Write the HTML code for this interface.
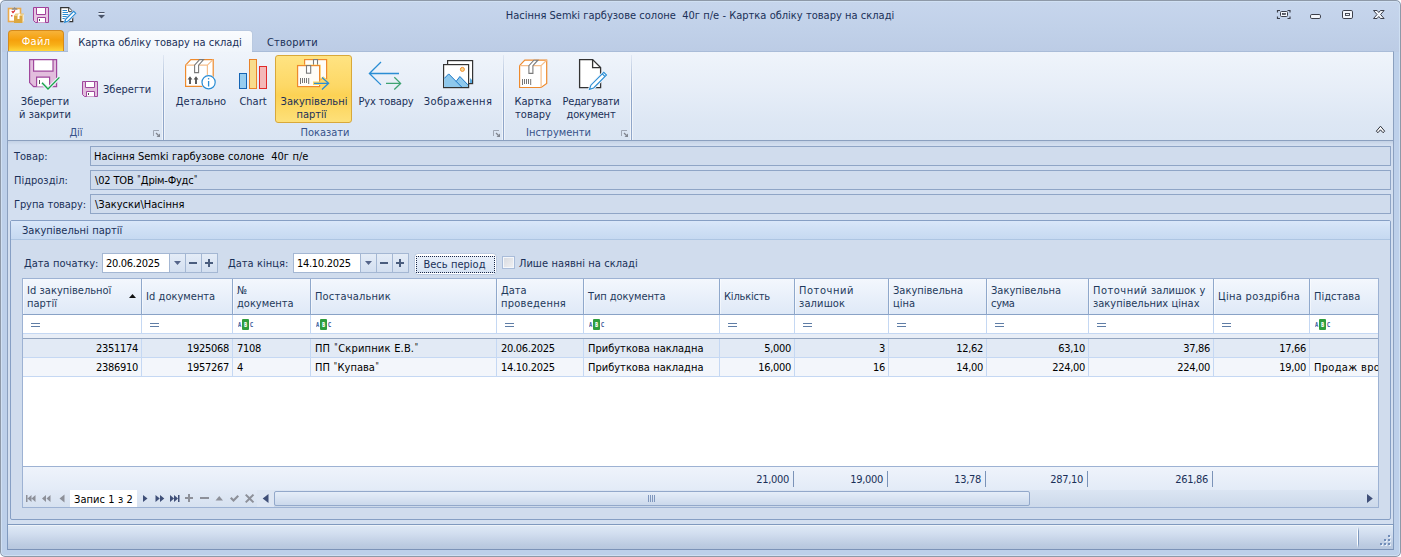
<!DOCTYPE html>
<html lang="uk">
<head>
<meta charset="utf-8">
<title>Картка обліку товару на складі</title>
<style>
*{box-sizing:border-box;margin:0;padding:0}
html,body{width:1401px;height:557px;overflow:hidden;background:#fff}
body{font-family:"DejaVu Sans Condensed","DejaVu Sans","Liberation Sans",sans-serif;font-size:11px;color:#1a3058;position:relative;line-height:13px;word-spacing:0.25px}
#win{position:absolute;left:0;top:0;width:1401px;height:557px;background:#bdd0ea;border-radius:5px;overflow:hidden}
#win div,#win span,#win svg{position:absolute}
.t{white-space:pre}
.d{letter-spacing:-.3px}
#win span.w{position:static;letter-spacing:.17px}
#win span.q{position:relative;font-size:8px;top:-2px;padding:0 .5px}
.c{text-align:center}
.r{text-align:right;letter-spacing:-.3px}
.k{color:#000}
.inp{border:1px solid #8fa5c6;background:#d0dced;height:20px;left:90px;width:1301px}
.inp>span{left:3px;top:3px;color:#000}
.hd{top:0;height:36px;border-bottom:1px solid #89a2c6;border-right:1px solid #8fa8cb;background:linear-gradient(#f3f7fd,#e9f0fa 50%,#dfe9f7);box-shadow:inset 1px 0 0 rgba(255,255,255,.5)}
.hd span{left:4px;white-space:pre;color:#1e395b}
.fc{top:36px;height:19px;background:#fff;border-right:1px solid #c5d8f3;border-bottom:1px solid #c5d8f3}
.cell{height:19px;border-right:1px solid #c5d8f3;border-bottom:1px solid #c5d8f3;color:#000;white-space:pre;padding:3px 3px 0 4px;overflow:hidden}
.r1 .cell{background:#e2eaf5}
.r2 .cell{background:#f3f6fb}
.eq{left:8px;top:8px;width:9px;height:4px;border-top:1px solid #5f7da6;border-bottom:1px solid #5f7da6}
.sbtn{width:16px;height:20px;border:1px solid #a4b7d3;border-left:none;background:linear-gradient(#e4ecf7,#d3dff0)}
</style>
</head>
<body>
<div id="win">

<div id="title" style="left:0;top:0;width:1401px;height:52px;background:linear-gradient(#c7d6ed,#c1d1e9 28px,#bccce5)"></div>
<div class="t c" style="left:400px;top:9px;width:600px;word-spacing:.1px">Насіння Semki гарбузове солоне  40г п/е - Картка обліку товару на складі</div>
<div id="file" style="left:8px;top:30px;width:56px;height:21px;border:1px solid #d48a1c;border-bottom:none;border-radius:4px 4px 0 0;background:linear-gradient(#f7b33a,#f5a00c 45%,#f8b018 70%,#ffd53a)"><span class="t c" style="left:0;top:4px;width:54px;color:#fff;letter-spacing:.3px">Файл</span></div>
<div id="tab1" style="left:67px;top:30px;width:186px;height:22px;border:1px solid #b9c9e0;border-bottom:none;border-radius:4px 4px 0 0;background:linear-gradient(#fafcfe,#f0f5fb)"><span class="t c" style="left:0;top:5px;width:184px;letter-spacing:-.07px">Картка обліку товару на складі</span></div>
<div class="t" style="left:267px;top:36px;letter-spacing:.19px">Створити</div>
<div id="ribbon" style="left:7px;top:51px;width:1387px;height:90px;border:1px solid #8ba0bf;border-top-color:#a9bcd8;background:linear-gradient(#eff4fb,#e7eef8 35px,#dde7f4 70px,#dae5f3)"></div>
<div style="left:68px;top:51px;width:184px;height:1px;background:#f0f5fb"></div>
<div style="left:162px;top:55px;width:3px;height:85px;background:linear-gradient(rgba(255,255,255,0),rgba(255,255,255,.55) 40%,rgba(255,255,255,.55))"></div>
<div style="left:163px;top:55px;width:1px;height:85px;background:linear-gradient(rgba(143,166,201,0.15),#8fa6c9 45%,#8fa6c9)"></div>
<div style="left:502px;top:55px;width:3px;height:85px;background:linear-gradient(rgba(255,255,255,0),rgba(255,255,255,.55) 40%,rgba(255,255,255,.55))"></div>
<div style="left:503px;top:55px;width:1px;height:85px;background:linear-gradient(rgba(143,166,201,0.15),#8fa6c9 45%,#8fa6c9)"></div>
<div style="left:630px;top:55px;width:3px;height:85px;background:linear-gradient(rgba(255,255,255,0),rgba(255,255,255,.55) 40%,rgba(255,255,255,.55))"></div>
<div style="left:631px;top:55px;width:1px;height:85px;background:linear-gradient(rgba(143,166,201,0.15),#8fa6c9 45%,#8fa6c9)"></div>
<div class="t c" style="left:8px;top:126px;width:136px;color:#36528a">Дії</div>
<div class="t c" style="left:165px;top:126px;width:320px;color:#36528a">Показати</div>
<div class="t c" style="left:505px;top:126px;width:107px;color:#36528a">Інструменти</div>
<div style="left:275px;top:55px;width:77px;height:68px;border:1px solid #d8a83a;border-radius:3px;background:linear-gradient(#ffe382,#fdd866 45%,#fcd254 60%,#fde07a)"></div>
<div class="t c" style="left:-5px;top:95px;width:100px">Зберегти</div>
<div class="t c" style="left:-5px;top:108px;width:100px">й закрити</div>
<div class="t" style="left:103px;top:83px">Зберегти</div>
<div class="t c" style="left:151px;top:95px;width:100px">Детально</div>
<div class="t c" style="left:203px;top:95px;width:100px">Chart</div>
<div class="t c" style="left:264px;top:95px;width:100px">Закупівельні</div>
<div class="t c" style="left:261.5px;top:108px;width:100px">партії</div>
<div class="t c" style="left:336px;top:95px;width:100px;letter-spacing:-0.2px">Рух товару</div>
<div class="t c" style="left:408px;top:95px;width:100px;letter-spacing:0.38px">Зображення</div>
<div class="t c" style="left:483px;top:95px;width:100px">Картка</div>
<div class="t c" style="left:483px;top:108px;width:100px">товару</div>
<div class="t c" style="left:541px;top:95px;width:100px;letter-spacing:-0.33px">Редагувати</div>
<div class="t c" style="left:541px;top:108px;width:100px;letter-spacing:-0.2px">документ</div>
<svg id="icons" style="left:0;top:0" width="1401" height="141" viewBox="0 0 1401 141" fill="none">
<!-- save and close (large) -->
<g stroke="#a0479d" stroke-width="1.2">
<path d="M29.6 59.6h27v27h-23l-4-4z" fill="#e2bedd"/>
<path d="M33.6 59.6h19.4v11.6h-19.4z" fill="#fff"/>
<path d="M36.6 86.6v-9.4h13v9.4" fill="#fff"/>
</g>
<path d="M39.5 80v4" stroke="#555" stroke-width="1"/>
<path d="M42 82.700l6 6.300 11.400-11.600" stroke="#eaf0f9" stroke-width="3.600"/>
<path d="M42 82.7l6 6.3 11.4-11.6" stroke="#1aa44a" stroke-width="1.3"/>
<!-- save small -->
<g stroke="#a0479d" stroke-width="1">
<path d="M82.5 81.5h15v15h-13l-2-2z" fill="#e2bedd"/>
<path d="M85.5 81.5h9v6h-9z" fill="#fff"/>
<path d="M86.5 96.5v-5h8v5" fill="#fff"/>
</g>
<path d="M88.5 93v2" stroke="#555" stroke-width="1"/>
<!-- detail box -->
<g stroke="#ee8a2d" stroke-width="1.2">
<path d="M185.6 65.2l5.2-5.6h22.4v20l-5.6 6.8h-22z" fill="#fff"/>
</g>
<path d="M185.6 65.2h21.8v21M207.4 65.2l5.6-5.6" stroke="#f6bf8c" stroke-width="1.2"/>
<path d="M199.6 59.6h4l-5 5.6v7.4h-4v-7.4z" fill="#fff" stroke="#7a7a7a" stroke-width="1.1"/>
<path d="M190 84v-6M196 84v-6" stroke="#555" stroke-width="1.900"/>
<path d="M187.600 79.400l2.400-3.200 2.400 3.200zM193.600 79.400l2.400-3.200 2.400 3.200z" fill="#555"/>
<circle cx="208.6" cy="82.3" r="7.6" fill="#eef3fa"/>
<circle cx="208.6" cy="82.3" r="6.6" fill="#fff" stroke="#2a8dd4" stroke-width="1.2"/>
<path d="M208.6 81v5.400" stroke="#2a8dd4" stroke-width="1.3"/>
<circle cx="208.6" cy="78.700" r="0.8" fill="#2a8dd4"/>
<!-- chart -->
<rect x="239.5" y="73.500" width="7" height="15" fill="#97cdf0" stroke="#1464b4"/>
<rect x="249.500" y="59.500" width="7" height="29" fill="#f8dc8c" stroke="#e8822a"/>
<rect x="259.500" y="66.500" width="7" height="22" fill="#f4b8b8" stroke="#e02a2a"/>
<!-- purchase batches -->
<rect x="304.600" y="59.600" width="22" height="19.500" fill="#fffdf8" stroke="#ee8a2d" stroke-width="1.2"/>
<rect x="313.500" y="59.600" width="4" height="6" fill="#fff" stroke="#7a7a7a" stroke-width="1.1"/>
<rect x="296.600" y="64.600" width="24" height="23" fill="#fdd866"/>
<rect x="297.600" y="65.600" width="22" height="21" fill="#fffdf8" stroke="#ee8a2d" stroke-width="1.200"/>
<rect x="306.500" y="65.600" width="4.200" height="7.600" fill="#fff" stroke="#7a7a7a" stroke-width="1.100"/>
<path d="M300.500 78v6M302.500 78v5M304.500 78v5M306.500 78v5M308.700 78v6" stroke="#666" stroke-width="0.9"/>
<path d="M313 83.300h15M322 77.500l6.600 5.800-6.600 6.200" stroke="#fdd866" stroke-width="3.600"/>
<path d="M314 83.300h14.400M322 77.500l6.600 5.800-6.600 6.200" stroke="#2a8dd4" stroke-width="1.300"/>
<!-- movement -->
<path d="M399 73.500h-29.500M381 62l-11.600 11.500 11.600 11.400" stroke="#2a8dd4" stroke-width="1.300"/>
<path d="M386 83.400h14.500M394.300 77.300l6.300 6.100-6.300 6.100" stroke="#3fa372" stroke-width="1.300"/>
<!-- images -->
<rect x="447.600" y="60.600" width="25" height="23" fill="#fff" stroke="#333" stroke-width="1.200"/>
<path d="M470 78l2 2v3h-2z" fill="#5aaae0"/>
<rect x="443.600" y="64.600" width="25" height="23" fill="#fff" stroke="#333" stroke-width="1.200"/>
<path d="M444.200 78.500l4.500-4.600 7.500 7.500 3.700-4.900 8.100 8.400v2.100h-23.800z" fill="#8ec8ec"/>
<path d="M444.200 78.500l4.500-4.600 13 13.100M456.200 81.400l3.700-4.900 8.100 8.400" stroke="#1a78c8" stroke-width="1"/>
<circle cx="462.400" cy="69.400" r="2" fill="#f8d890" stroke="#f08a28" stroke-width="1"/>
<!-- product card box -->
<path d="M519.600 65.600l5.200-5.400h21.900v23.300l-5.600 4h-21.500z" fill="#fff" stroke="#ee8a2d" stroke-width="1.200"/>
<path d="M519.600 65.600h21.500v21.800M541.100 65.600l5.600-5.400" stroke="#f6bf8c" stroke-width="1.200"/>
<path d="M533.900 60.200h4l-5 5.400v7.800h-4v-7.800z" fill="#fff" stroke="#7a7a7a" stroke-width="1.100"/>
<path d="M522.500 79v6M524.500 79v5M526.500 79v5M528.500 79v5M530.700 79v6" stroke="#666" stroke-width="0.900"/>
<!-- edit document -->
<path d="M579.600 59.600h13l8 8v20h-21z" fill="#fff" stroke="#333" stroke-width="1.300"/>
<path d="M592.600 59.600v8h8" stroke="#333" stroke-width="1.300"/>
<path d="M589.500 89.300l1.400-4.100 12.900-12.900 2.700 2.700-12.900 12.900z" fill="#fff" stroke="#eef3fa" stroke-width="3"/>
<path d="M589.500 89.300l1.400-4.100 12.900-12.900 2.700 2.700-12.900 12.900zM602.300 73.800l2.700 2.700" fill="#fff" stroke="#2a8dd4" stroke-width="1.100"/>
<!-- QAT 1: clipboard + box -->
<rect x="8.500" y="8.500" width="12" height="13" fill="#fff" stroke="#eaaa4e" stroke-width="1.600"/>
<path d="M11.500 9.700h6.200l-1-1.500h-1.200l-.9-1.200-.9 1.200h-1.200z" fill="#8a8a8a"/>
<path d="M11.800 11.200l1.200 1.300 2-2.200M11.800 15v1.600" stroke="#d62a2a" stroke-width="1.200"/>
<path d="M14 16l1.500-2.300h8.500v7.300l-1.500 2h-8.500z" fill="#dba73f"/>
<path d="M14 16h8.500l1.500-2.300h-8.500z" fill="#efd089"/>
<path d="M22.500 16v7l1.500-2v-7.300z" fill="#fff" opacity=".75"/>
<path d="M17.500 16l1.300-2.300h1.800l-1.100 2.300v3h-2z" fill="#fff"/>
<!-- QAT 2: save -->
<g stroke="#a0409a" stroke-width="1">
<path d="M33.500 7.500h15v15h-13l-2-2z" fill="#e6c6e2"/>
<path d="M36.500 7.500h9v7h-9z" fill="#fff"/>
<path d="M37.500 22.500v-5h8v5" fill="#fff"/>
</g>
<path d="M39.500 19v2" stroke="#555" stroke-width="1"/>
<!-- QAT 3: doc edit -->
<path d="M60.700 7.700h8l4 4v10h-12z" fill="#fff" stroke="#333" stroke-width="1.200"/>
<path d="M68.700 7.700v4h4" fill="#fff" stroke="#333" stroke-width="1"/>
<path d="M62.500 10.500h4.500M62.500 12.500h5.500M62.500 14.500h6M62.500 16.500h5M62.500 18.500h3" stroke="#2a8dd4" stroke-width="1"/>
<path d="M64.700 22.300l1-3 8-8 2 2-8 8z" fill="#fff" stroke="#c1d1e9" stroke-width="2.600"/>
<path d="M64.700 22.300l1-3 8-8 2 2-8 8z" fill="#fff" stroke="#2a8dd4" stroke-width="1.100"/>
<path d="M64.700 22.300l.6-1.800 1.200 1.200z" fill="#2a8dd4"/>
<!-- QAT dropdown -->
<path d="M98.500 12.500h6" stroke="#4a5468" stroke-width="1"/>
<path d="M98.500 13.500h6" stroke="#e8eef7" stroke-width="1"/>
<path d="M98 15h7l-3.500 3.500z" fill="#4a5468"/>
<!-- window buttons -->
<g stroke="#3c3f4a" fill="#f4f7fc">
<path d="M1277.500 12.500v-2h2.500M1287.500 10.500h2.500v2M1290 16.500v2h-2.500M1280 18.500h-2.500v-2" fill="none" stroke-width="1.200"/>
<rect x="1280.500" y="11.500" width="7" height="5" rx="1" stroke-width="1"/>
<rect x="1282.500" y="13.500" width="3" height="1" stroke-width=".800" fill="#fff"/>
<rect x="1310.500" y="14.500" width="10" height="4" rx="1.300"/>
<rect x="1342.500" y="10.500" width="10" height="8" rx="1.300"/>
<rect x="1345.500" y="13.500" width="4" height="2" stroke-width=".900"/>
<path d="M1373.500 10.500h3.600l1.700 2 1.700-2h3.600l-3.500 4 3.500 4h-3.600l-1.700-2-1.700 2h-3.600l3.500-4z" stroke-linejoin="round"/>
</g>
<!-- collapse chevron -->
<path d="M1376.300 131.200l4.200-5 4.200 5-1.700 1.500-2.500-2.900-2.500 2.900z" fill="#fff" stroke="#2b2f3a" stroke-width="1" stroke-linejoin="round"/>
<!-- dialog launchers -->
<g>
<path d="M153.500 136v-5.500h5.500" stroke="#9fa6b3" stroke-width="1"/>
<path d="M156.500 137h3.500v-3.500z" fill="#80858f"/><path d="M156 133l2.500 2.500" stroke="#80858f" stroke-width="1.200"/>
</g>
<g transform="translate(340 0)">
<path d="M153.500 136v-5.500h5.500" stroke="#9fa6b3" stroke-width="1"/>
<path d="M156.500 137h3.500v-3.500z" fill="#80858f"/><path d="M156 133l2.500 2.500" stroke="#80858f" stroke-width="1.200"/>
</g>
<g transform="translate(468 0)">
<path d="M153.500 136v-5.500h5.500" stroke="#9fa6b3" stroke-width="1"/>
<path d="M156.500 137h3.500v-3.500z" fill="#80858f"/><path d="M156 133l2.500 2.500" stroke="#80858f" stroke-width="1.200"/>
</g>

</svg>
<div id="content" style="left:7px;top:141px;width:1387px;height:384px;border-left:1px solid #8ba0bf;border-right:1px solid #8ba0bf;background:linear-gradient(#c3d1e5,#d3dff0 4px,#d3dff0)"></div>
<div class="t" style="left:14px;top:150px">Товар:</div>
<div class="inp" style="top:146px"><span class="t" style="left:3px">Насіння Semki гарбузове солоне  40г п/е</span></div>
<div class="t" style="left:14px;top:174px">Підрозділ:</div>
<div class="inp" style="top:170px"><span class="t" style="left:4px;letter-spacing:-.2px">\02 ТОВ <span class=q>"</span>Дрім-Фудс<span class=q>"</span></span></div>
<div class="t" style="left:14px;top:198px;letter-spacing:-.1px">Група товару:</div>
<div class="inp" style="top:194px"><span class="t" style="left:4px">\Закуски\Насіння</span></div>
<div id="gb" style="left:10px;top:220px;width:1381px;height:300px;border:1px solid #869fc4;border-radius:2px;background:#d0dced"></div>
<div style="left:11px;top:221px;width:1379px;height:19px;background:linear-gradient(#dae7f9,#d2e2f6 30%,#c6d9f1);border-bottom:1px solid #adc5e2"></div>
<div class="t" style="left:22px;top:224px">Закупівельні партії</div>
<div class="t" style="left:24px;top:257px">Дата початку:</div>
<div style="left:102px;top:253px;width:68px;height:20px;border:1px solid #a4b7d3;background:#fff"><span class="t k d" style="left:3px;top:3px">20.06.2025</span></div>
<div class="sbtn" style="left:170px;top:253px"><svg style="left:4px;top:7px" width="7" height="4"><path d="M0 0h7L3.5 4z" fill="#55658a"/></svg></div>
<div class="sbtn" style="left:186px;top:253px"><span style="left:3px;top:8px;width:8px;height:2px;background:#4a5d7e"></span></div>
<div class="sbtn" style="left:202px;top:253px"><span style="left:3px;top:8px;width:8px;height:2px;background:#4a5d7e"></span><span style="left:6px;top:5px;width:2px;height:8px;background:#4a5d7e"></span></div>
<div class="t" style="left:228px;top:257px">Дата кінця:</div>
<div style="left:293px;top:253px;width:68px;height:20px;border:1px solid #a4b7d3;background:#fff"><span class="t k d" style="left:3px;top:3px">14.10.2025</span></div>
<div class="sbtn" style="left:361px;top:253px"><svg style="left:4px;top:7px" width="7" height="4"><path d="M0 0h7L3.5 4z" fill="#55658a"/></svg></div>
<div class="sbtn" style="left:377px;top:253px"><span style="left:3px;top:8px;width:8px;height:2px;background:#4a5d7e"></span></div>
<div class="sbtn" style="left:393px;top:253px"><span style="left:3px;top:8px;width:8px;height:2px;background:#4a5d7e"></span><span style="left:6px;top:5px;width:2px;height:8px;background:#4a5d7e"></span></div>
<div style="left:414px;top:253px;width:83px;height:22px;border:1px solid #bccbe2;border-radius:4px;background:#fff"><span style="left:1px;top:2px;width:79px;height:17px;background:linear-gradient(#e9f0fa,#d7e3f3)"></span><span style="left:1px;top:2px;width:79px;height:17px;border:1px dotted #1c2a4a"></span><span class="t c" style="left:-1px;top:4px;width:81px">Весь період</span></div>
<div style="left:502px;top:256px;width:13px;height:13px;border:1px solid #a9bcd9;background:#f4f7fb"><span style="left:1px;top:1px;width:9px;height:9px;background:linear-gradient(135deg,#d9dce2,#efeff1)"></span></div>
<div class="t" style="left:519px;top:257px">Лише наявні на складі</div>
<div id="grid" style="left:22px;top:278px;width:1357px;height:230px;border:1px solid #9db2d3;background:#fff;overflow:hidden">
<div class="hd" style="left:0px;width:119px"><span style="top:5px">Id закупівельної</span><span style="top:18px">партії</span><svg style="left:106px;top:15px" width="7" height="4"><path d="M0 4h7L3.5 0z" fill="#111"/></svg></div>
<div class="fc" style="left:0px;width:119px"><span class=eq></span></div>
<div class="hd" style="left:119px;width:91px"><span style="top:11px">Id документа</span></div>
<div class="fc" style="left:119px;width:91px"><span class=eq></span></div>
<div class="hd" style="left:210px;width:78px"><span style="top:5px">№</span><span style="top:18px">документа</span></div>
<div class="fc" style="left:210px;width:78px"><svg style="left:5px;top:4px" width="16" height="11"><rect x="4" y="0" width="7" height="11" rx="1" fill="#2f9e3d"/><text x="-0.100" y="8" font-family="DejaVu Sans Condensed,DejaVu Sans,sans-serif" font-size="6.900" font-weight="bold" textLength="3.200" lengthAdjust="spacingAndGlyphs" fill="#3f62a0">A</text><text x="5.900" y="8" font-family="DejaVu Sans Condensed,DejaVu Sans,sans-serif" font-size="6.900" font-weight="bold" textLength="3.200" lengthAdjust="spacingAndGlyphs" fill="#fff">B</text><text x="11.900" y="8" font-family="DejaVu Sans Condensed,DejaVu Sans,sans-serif" font-size="6.900" font-weight="bold" textLength="3.200" lengthAdjust="spacingAndGlyphs" fill="#3f62a0">C</text></svg></div>
<div class="hd" style="left:288px;width:186px"><span style="top:11px;letter-spacing:0.18px">Постачальник</span></div>
<div class="fc" style="left:288px;width:186px"><svg style="left:5px;top:4px" width="16" height="11"><rect x="4" y="0" width="7" height="11" rx="1" fill="#2f9e3d"/><text x="-0.100" y="8" font-family="DejaVu Sans Condensed,DejaVu Sans,sans-serif" font-size="6.900" font-weight="bold" textLength="3.200" lengthAdjust="spacingAndGlyphs" fill="#3f62a0">A</text><text x="5.900" y="8" font-family="DejaVu Sans Condensed,DejaVu Sans,sans-serif" font-size="6.900" font-weight="bold" textLength="3.200" lengthAdjust="spacingAndGlyphs" fill="#fff">B</text><text x="11.900" y="8" font-family="DejaVu Sans Condensed,DejaVu Sans,sans-serif" font-size="6.900" font-weight="bold" textLength="3.200" lengthAdjust="spacingAndGlyphs" fill="#3f62a0">C</text></svg></div>
<div class="hd" style="left:474px;width:87px"><span style="top:5px">Дата</span><span style="top:18px;letter-spacing:0.25px">проведення</span></div>
<div class="fc" style="left:474px;width:87px"><span class=eq></span></div>
<div class="hd" style="left:561px;width:136px"><span style="top:11px;letter-spacing:-0.12px">Тип документа</span></div>
<div class="fc" style="left:561px;width:136px"><svg style="left:5px;top:4px" width="16" height="11"><rect x="4" y="0" width="7" height="11" rx="1" fill="#2f9e3d"/><text x="-0.100" y="8" font-family="DejaVu Sans Condensed,DejaVu Sans,sans-serif" font-size="6.900" font-weight="bold" textLength="3.200" lengthAdjust="spacingAndGlyphs" fill="#3f62a0">A</text><text x="5.900" y="8" font-family="DejaVu Sans Condensed,DejaVu Sans,sans-serif" font-size="6.900" font-weight="bold" textLength="3.200" lengthAdjust="spacingAndGlyphs" fill="#fff">B</text><text x="11.900" y="8" font-family="DejaVu Sans Condensed,DejaVu Sans,sans-serif" font-size="6.900" font-weight="bold" textLength="3.200" lengthAdjust="spacingAndGlyphs" fill="#3f62a0">C</text></svg></div>
<div class="hd" style="left:697px;width:75px"><span style="top:11px;letter-spacing:-0.2px">Кількість</span></div>
<div class="fc" style="left:697px;width:75px"><span class=eq></span></div>
<div class="hd" style="left:772px;width:94px"><span style="top:5px;letter-spacing:0.55px">Поточний</span><span style="top:18px;letter-spacing:0.14px">залишок</span></div>
<div class="fc" style="left:772px;width:94px"><span class=eq></span></div>
<div class="hd" style="left:866px;width:98px"><span style="top:5px">Закупівельна</span><span style="top:18px">ціна</span></div>
<div class="fc" style="left:866px;width:98px"><span class=eq></span></div>
<div class="hd" style="left:964px;width:102px"><span style="top:5px">Закупівельна</span><span style="top:18px;letter-spacing:-0.3px">сума</span></div>
<div class="fc" style="left:964px;width:102px"><span class=eq></span></div>
<div class="hd" style="left:1066px;width:125px"><span style="top:5px"><span class=w style="letter-spacing:.5px">Поточний</span> залишок у</span><span style="top:18px">закупівельних цінах</span></div>
<div class="fc" style="left:1066px;width:125px"><span class=eq></span></div>
<div class="hd" style="left:1191px;width:96px"><span style="top:11px;letter-spacing:0.25px">Ціна роздрібна</span></div>
<div class="fc" style="left:1191px;width:96px"><span class=eq></span></div>
<div class="hd" style="left:1287px;width:69px"><span style="top:11px">Підстава</span></div>
<div class="fc" style="left:1287px;width:69px"><svg style="left:5px;top:4px" width="16" height="11"><rect x="4" y="0" width="7" height="11" rx="1" fill="#2f9e3d"/><text x="-0.100" y="8" font-family="DejaVu Sans Condensed,DejaVu Sans,sans-serif" font-size="6.900" font-weight="bold" textLength="3.200" lengthAdjust="spacingAndGlyphs" fill="#3f62a0">A</text><text x="5.900" y="8" font-family="DejaVu Sans Condensed,DejaVu Sans,sans-serif" font-size="6.900" font-weight="bold" textLength="3.200" lengthAdjust="spacingAndGlyphs" fill="#fff">B</text><text x="11.900" y="8" font-family="DejaVu Sans Condensed,DejaVu Sans,sans-serif" font-size="6.900" font-weight="bold" textLength="3.200" lengthAdjust="spacingAndGlyphs" fill="#3f62a0">C</text></svg></div>
<div style="left:0;top:55px;width:1357px;height:4px;background:#e8eef7"></div>
<div style="left:0;top:59px;width:1357px;height:1px;background:#93a5c0"></div>
<div class="r1" style="left:0;top:60px;width:1357px;height:19px">
<div class="cell r" style="left:0px;top:0;width:119px">2351174</div>
<div class="cell r" style="left:119px;top:0;width:91px">1925068</div>
<div class="cell d" style="left:210px;top:0;width:78px">7108</div>
<div class="cell " style="left:288px;top:0;width:186px"><span class=w>ПП <span class=q>"</span>Скрипник Е.В.<span class=q>"</span></span></div>
<div class="cell d" style="left:474px;top:0;width:87px">20.06.2025</div>
<div class="cell " style="left:561px;top:0;width:136px">Прибуткова накладна</div>
<div class="cell r" style="left:697px;top:0;width:75px">5,000</div>
<div class="cell r" style="left:772px;top:0;width:94px">3</div>
<div class="cell r" style="left:866px;top:0;width:98px">12,62</div>
<div class="cell r" style="left:964px;top:0;width:102px">63,10</div>
<div class="cell r" style="left:1066px;top:0;width:125px">37,86</div>
<div class="cell r" style="left:1191px;top:0;width:96px">17,66</div>
<div class="cell " style="left:1287px;top:0;width:69px"></div>
</div>
<div class="r2" style="left:0;top:79px;width:1357px;height:19px">
<div class="cell r" style="left:0px;top:0;width:119px">2386910</div>
<div class="cell r" style="left:119px;top:0;width:91px">1957267</div>
<div class="cell d" style="left:210px;top:0;width:78px">4</div>
<div class="cell " style="left:288px;top:0;width:186px">ПП <span class=q>"</span>Купава<span class=q>"</span></div>
<div class="cell d" style="left:474px;top:0;width:87px">14.10.2025</div>
<div class="cell " style="left:561px;top:0;width:136px">Прибуткова накладна</div>
<div class="cell r" style="left:697px;top:0;width:75px">16,000</div>
<div class="cell r" style="left:772px;top:0;width:94px">16</div>
<div class="cell r" style="left:866px;top:0;width:98px">14,00</div>
<div class="cell r" style="left:964px;top:0;width:102px">224,00</div>
<div class="cell r" style="left:1066px;top:0;width:125px">224,00</div>
<div class="cell r" style="left:1191px;top:0;width:96px">19,00</div>
<div class="cell " style="left:1287px;top:0;width:69px"><span class=w style="letter-spacing:.3px">Продаж врозд</span></div>
</div>
<div style="left:0;top:187px;width:1357px;height:24px;border-top:1px solid #9db2d3;background:linear-gradient(#eef3fb,#e3ebf7)"></div>
<div class="t r" style="left:697px;top:194px;width:69px">21,000</div>
<div style="left:770px;top:192px;width:1px;height:16px;background:#7b93b8"></div>
<div class="t r" style="left:772px;top:194px;width:88px">19,000</div>
<div style="left:864px;top:192px;width:1px;height:16px;background:#7b93b8"></div>
<div class="t r" style="left:866px;top:194px;width:92px">13,78</div>
<div style="left:962px;top:192px;width:1px;height:16px;background:#7b93b8"></div>
<div class="t r" style="left:964px;top:194px;width:96px">287,10</div>
<div style="left:1064px;top:192px;width:1px;height:16px;background:#7b93b8"></div>
<div class="t r" style="left:1066px;top:194px;width:119px">261,86</div>
<div style="left:1189px;top:192px;width:1px;height:16px;background:#7b93b8"></div>
<div style="left:0;top:211px;width:1357px;height:17px;background:linear-gradient(#e2eaf6,#d6e1f0)"></div>
<div style="left:47px;top:211px;width:67px;height:17px;background:#fff"><span class="t c k" style="left:0;top:3px;width:67px">Запис 1 з 2</span></div>
<svg id="nav" style="left:0;top:211px" width="1357" height="17" viewBox="23 490 1357 17">
<g fill="#8d9099">
<path d="M26 495h1.500v7h-1.500zM31.500 495v7l-4-3.500zM35.500 495v7l-4-3.500z"/>
<path d="M46 495v7l-4-3.500zM50.500 495v7l-4-3.500z"/>
<path d="M64.500 494.500v8l-5-4z"/>
<path d="M185 497h8v2h-8zM188 494h2v8h-2z"/>
<path d="M200 497h9v2h-9z"/>
<path d="M215.500 500.500h7.500l-3.750-4.500z"/>
<path d="M230 498.500l1.500-1.500 2 2 4-4 1.500 1.500-5.500 5.500z"/>
<path d="M245 495.300l1.400-1.400 3.200 3.200 3.200-3.200 1.400 1.400-3.200 3.200 3.200 3.200-1.400 1.400-3.200-3.200-3.200 3.200-1.400-1.400 3.200-3.200z"/>
</g>
<g fill="#3f4f78">
<path d="M143 495v7l4.500-3.500z"/>
<path d="M155.500 495v7l4.300-3.500zM160 495v7l4.300-3.500z"/>
<path d="M170 495v7l4-3.500zM174 495v7l4-3.500zM178 495h1.500v7h-1.500z"/>
</g>
<rect x="257" y="490" width="1122" height="17" fill="url(#trk)"/>
<rect x="257" y="490" width="17" height="17" fill="#dde6f3"/>
<path d="M268.500 494v9l-5.800-4.500z" fill="#3f4f78"/>
<defs><linearGradient id="tg" x1="0" y1="0" x2="0" y2="1"><stop offset="0" stop-color="#e6eef9"/><stop offset="1" stop-color="#cad8eb"/></linearGradient><linearGradient id="trk" x1="0" y1="0" x2="0" y2="1"><stop offset="0" stop-color="#dbe5f3"/><stop offset="1" stop-color="#ccd9ea"/></linearGradient></defs><rect x="274.500" y="491.500" width="755" height="14" rx="1.500" fill="url(#tg)" stroke="#92a8ca"/>
<path d="M648.500 495v7M650.500 495v7M652.500 495v7M654.500 495v7" stroke="#7f97bd" stroke-width="1"/>
<path d="M1367 494v9l5.800-4.500z" fill="#3f4f78"/>

</svg>
</div>
<div id="status" style="left:7px;top:524px;width:1387px;height:26px;border:1px solid #7f99be;border-bottom-color:#7c93b8;background:linear-gradient(#fff,#dde8f5 1px,#d3dff0 8px,#bccbe1 20px,#b7c7de)"></div>
<div style="left:1357px;top:527px;width:1px;height:21px;background:linear-gradient(rgba(255,255,255,0),#fff 20%,#fff 80%,rgba(255,255,255,0))"></div>
<div style="left:1358px;top:527px;width:1px;height:21px;background:linear-gradient(rgba(127,153,190,0),#7f99be 20%,#7f99be 80%,rgba(127,153,190,0))"></div>
<svg style="left:1379px;top:534px" width="13" height="13" viewBox="1379 534 13 13"><rect x="1389" y="536" width="2" height="2" fill="#e6eef8"/><rect x="1388" y="535" width="2" height="2" fill="#6f8cb8"/><rect x="1385" y="540" width="2" height="2" fill="#e6eef8"/><rect x="1384" y="539" width="2" height="2" fill="#6f8cb8"/><rect x="1389" y="540" width="2" height="2" fill="#e6eef8"/><rect x="1388" y="539" width="2" height="2" fill="#6f8cb8"/><rect x="1381" y="544" width="2" height="2" fill="#e6eef8"/><rect x="1380" y="543" width="2" height="2" fill="#6f8cb8"/><rect x="1385" y="544" width="2" height="2" fill="#e6eef8"/><rect x="1384" y="543" width="2" height="2" fill="#6f8cb8"/><rect x="1389" y="544" width="2" height="2" fill="#e6eef8"/><rect x="1388" y="543" width="2" height="2" fill="#6f8cb8"/></svg>
<div id="frame" style="left:0;top:0;width:1401px;height:557px;border:1px solid #8e99a8;border-radius:5px;box-shadow:inset 0 0 0 1px #d0e0f3;pointer-events:none"></div>
</div>
</body>
</html>
